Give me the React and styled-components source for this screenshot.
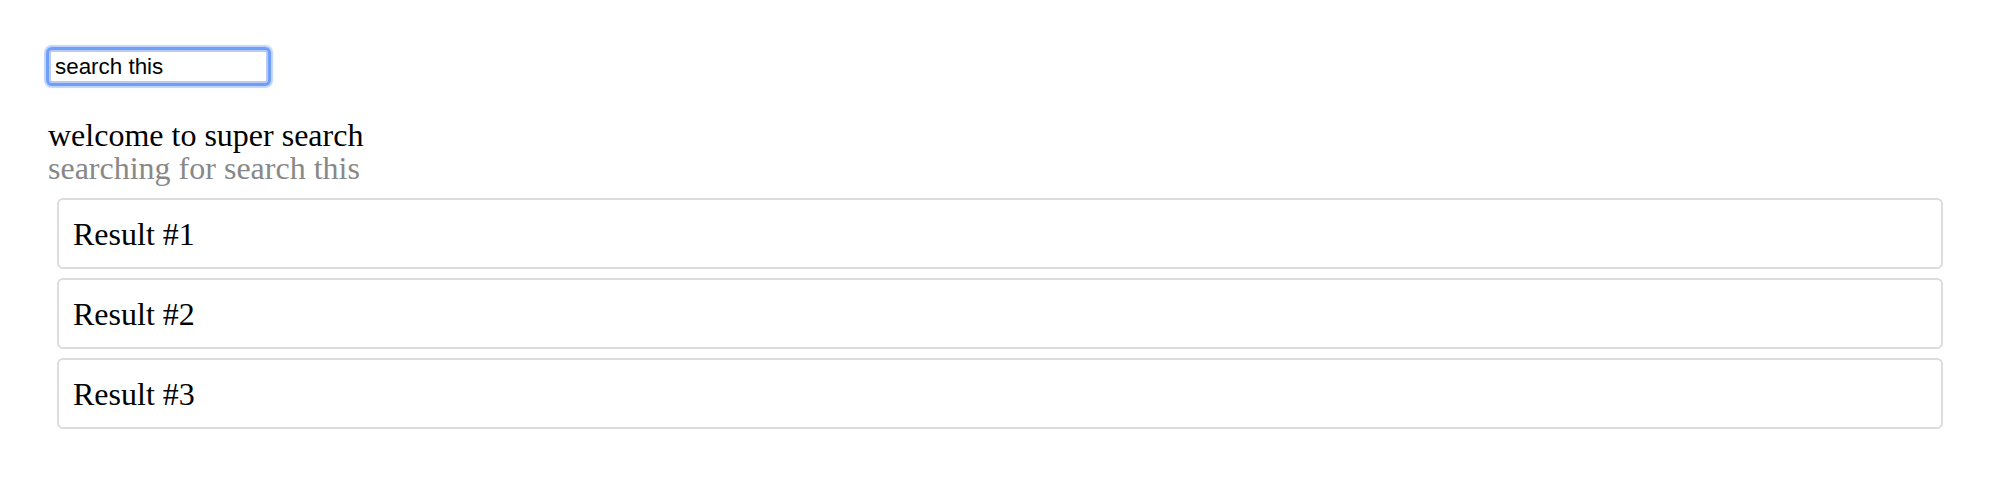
import React, { useState } from 'react';
import styled, { createGlobalStyle } from 'styled-components';

const GlobalStyle = createGlobalStyle`
    body {
        margin: 0;
        background: #fff;
        font-family: "Liberation Serif", "Times New Roman", serif;
    }
`;

const Page = styled.div`
    padding: 50px 48px 0 48px;
`;

const SearchInput = styled.input`
    display: block;
    box-sizing: border-box;
    width: 219px;
    height: 33px;
    margin: 0 0 0 1px;
    padding: 0 4px;
    border: 2px solid #b9cbef;
    border-radius: 3px;
    font-family: "Liberation Sans", Arial, sans-serif;
    font-size: 22.4px;
    color: #000;
    outline: none;
    box-shadow: 0 0 0 3px #6f9ff8, 0 0 1px 5px rgba(111, 159, 248, 0.45);
`;

const Header = styled.div`
    margin-top: 36px;
    font-size: 32px;
    line-height: 33px;
`;

const Title = styled.div`
    color: #000;
`;

const Subtitle = styled.div`
    color: #888;
`;

const Results = styled.div`
    display: flex;
    flex-direction: column;
    gap: 9px;
    margin: 13px 9px 0 9px;
`;

const ResultCard = styled.div`
    display: flex;
    align-items: center;
    box-sizing: border-box;
    height: 71px;
    padding: 0 14px;
    border: 2px solid #dcdcdc;
    border-radius: 6px;
    font-size: 32px;
    line-height: 32px;
    color: #000;
`;

export default function App() {
    const [query, setQuery] = useState('search this');
    const results = ['Result #1', 'Result #2', 'Result #3'];

    return (
        <React.Fragment>
            <GlobalStyle />
            <Page>
                <SearchInput
                    value={query}
                    onChange={e => setQuery(e.target.value)}
                />
                <Header>
                    <Title>welcome to super search</Title>
                    <Subtitle>searching for {query}</Subtitle>
                </Header>
                <Results>
                    {results.map(r => (
                        <ResultCard key={r}>{r}</ResultCard>
                    ))}
                </Results>
            </Page>
        </React.Fragment>
    );
}
